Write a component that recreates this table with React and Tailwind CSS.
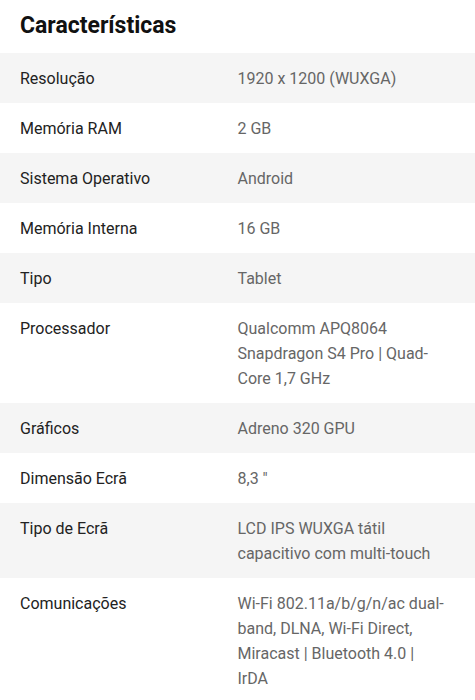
import React from "react";

const rows = [
  ["Resolução", "1920 x 1200 (WUXGA)"],
  ["Memória RAM", "2 GB"],
  ["Sistema Operativo", "Android"],
  ["Memória Interna", "16 GB"],
  ["Tipo", "Tablet"],
  ["Processador", "Qualcomm APQ8064 Snapdragon S4 Pro | Quad-Core 1,7 GHz"],
  ["Gráficos", "Adreno 320 GPU"],
  ["Dimensão Ecrã", "8,3 \""],
  ["Tipo de Ecrã", "LCD IPS WUXGA tátil capacitivo com multi-touch"],
  ["Comunicações", "Wi-Fi 802.11a/b/g/n/ac dual-band, DLNA, Wi-Fi Direct, Miracast | Bluetooth 4.0 | IrDA"],
];

export default function App() {
  return (
    <div className="bg-white w-[475px] min-h-[700px]" style={{ fontFamily: "Roboto, 'Noto Sans', sans-serif" }}>
      <h2 className="px-5 h-[53px] flex items-center text-[23px] font-bold text-[#111]">Características</h2>
      <div>
        {rows.map(([k, v], i) => (
          <div key={k} className={`grid grid-cols-2 px-5 py-[12.5px] text-[16px] leading-[25px] ${i % 2 === 0 ? "bg-[#f5f5f5]" : "bg-white"}`}>
            <div className="text-[#222]">{k}</div>
            <div className="text-[#666] pr-[8px]">{v}</div>
          </div>
        ))}
      </div>
    </div>
  );
}
